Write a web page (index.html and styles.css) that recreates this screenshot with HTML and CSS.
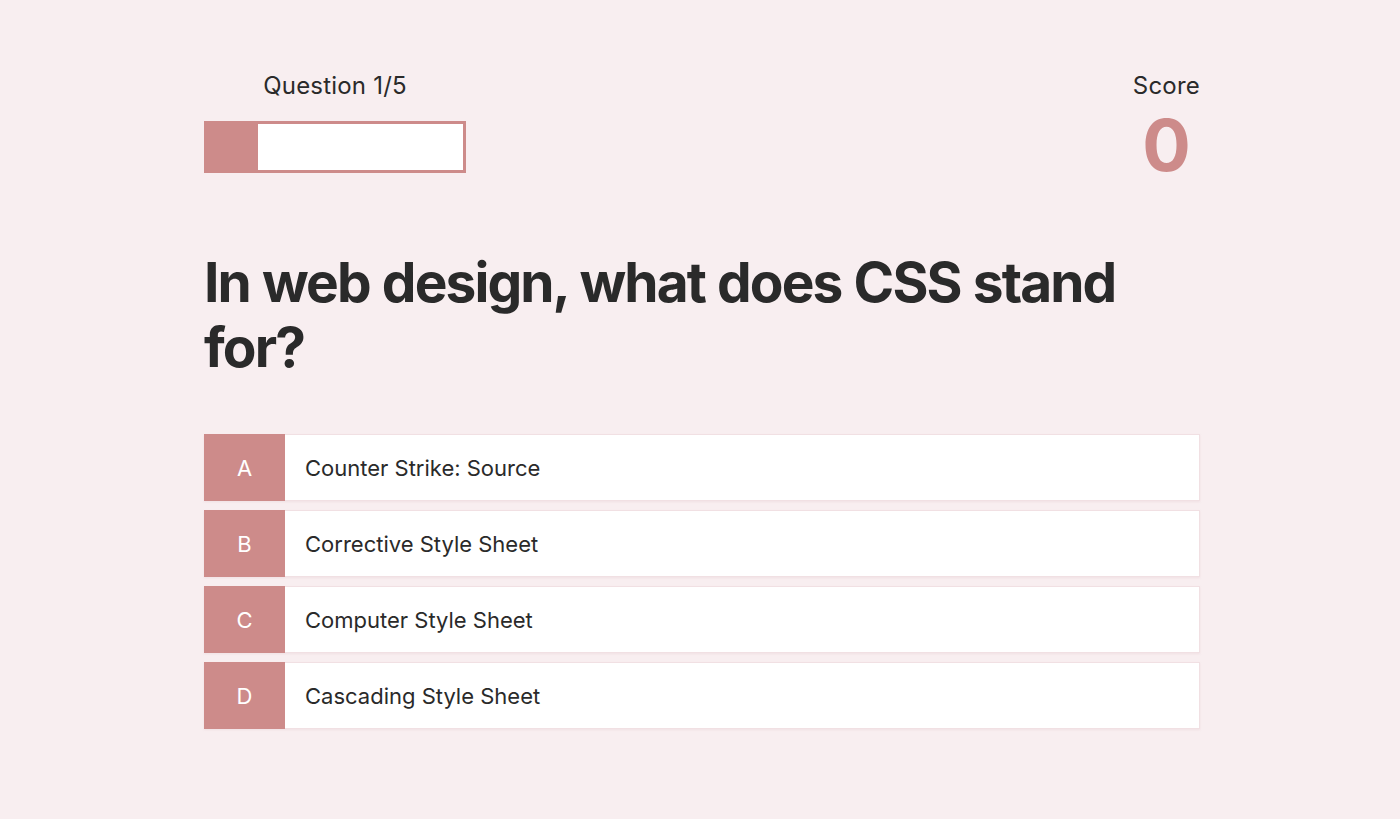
FILE: index.html
```html
<!DOCTYPE html>
<html lang="en">
<head>
<meta charset="utf-8">
<title>Quiz</title>
<link rel="stylesheet" href="styles.css">
</head>
<body>
<div class="container">
  <div class="hud">
    <div class="hud-item">
      <p class="hud-label">Question 1/5</p>
      <div class="progress"><div class="progress-fill" style="width: 20%"></div></div>
    </div>
    <div class="hud-item">
      <p class="hud-label">Score</p>
      <p class="hud-score">0</p>
    </div>
  </div>
  <h1 class="question">In web design, what does CSS stand for?</h1>
  <div class="choices">
    <div class="choice"><span class="choice-prefix">A</span><span class="choice-text">Counter Strike: Source</span></div>
    <div class="choice"><span class="choice-prefix">B</span><span class="choice-text">Corrective Style Sheet</span></div>
    <div class="choice"><span class="choice-prefix">C</span><span class="choice-text">Computer Style Sheet</span></div>
    <div class="choice"><span class="choice-prefix">D</span><span class="choice-text">Cascading Style Sheet</span></div>
  </div>
</div>
</body>
</html>
```
FILE: styles.css
```css
* { box-sizing: border-box; }
html, body { margin: 0; padding: 0; }
body {
  background: #f8eef0;
  color: #2a2a2a;
  font-family: Inter, "Noto Sans", "Liberation Sans", sans-serif;
  height: 819px;
  overflow: hidden;
}
.container {
  width: 996px;
  margin: 0 auto;
  padding-top: 71px;
  position: relative;
  left: 2px;
}
.hud {
  display: flex;
  justify-content: space-between;
  align-items: flex-start;
}
.hud-item {
  display: flex;
  flex-direction: column;
  align-items: center;
}
.hud-label {
  margin: 0;
  font-size: 24px;
  line-height: 29px;
  font-weight: 400;
  letter-spacing: 0.2px;
}
.progress {
  margin-top: 21px;
  width: 262px;
  height: 52px;
  border: 3px solid #cd8b8a;
  background: #ffffff;
}
.progress-fill {
  height: 100%;
  background: #cd8b8a;
}
.hud-score {
  margin: 0;
  font-size: 72px;
  line-height: 90px;
  font-weight: 700;
  color: #cd8b8a;
}
.question {
  margin: 60px 0 0;
  font-size: 55px;
  line-height: 65px;
  font-weight: 700;
  letter-spacing: -1.9px;
  word-spacing: 1px;
  color: #2a2a2a;
}
.choices {
  margin-top: 54px;
  display: flex;
  flex-direction: column;
  gap: 9px;
}
.choice {
  display: flex;
  align-items: stretch;
  height: 67px;
  background: #ffffff;
  border: 1px solid #f1e0e3;
  box-shadow: 0 1px 2px rgba(200, 150, 160, 0.15);
}
.choice-prefix {
  width: 81px;
  flex: none;
  display: flex;
  align-items: center;
  justify-content: center;
  background: #cd8b8a;
  color: #ffffff;
  font-size: 22px;
  margin: -1px 0 -1px -1px;
}
.choice-text {
  display: flex;
  align-items: center;
  padding-left: 20px;
  font-size: 22px;
  color: #2a2a2a;
}
```
